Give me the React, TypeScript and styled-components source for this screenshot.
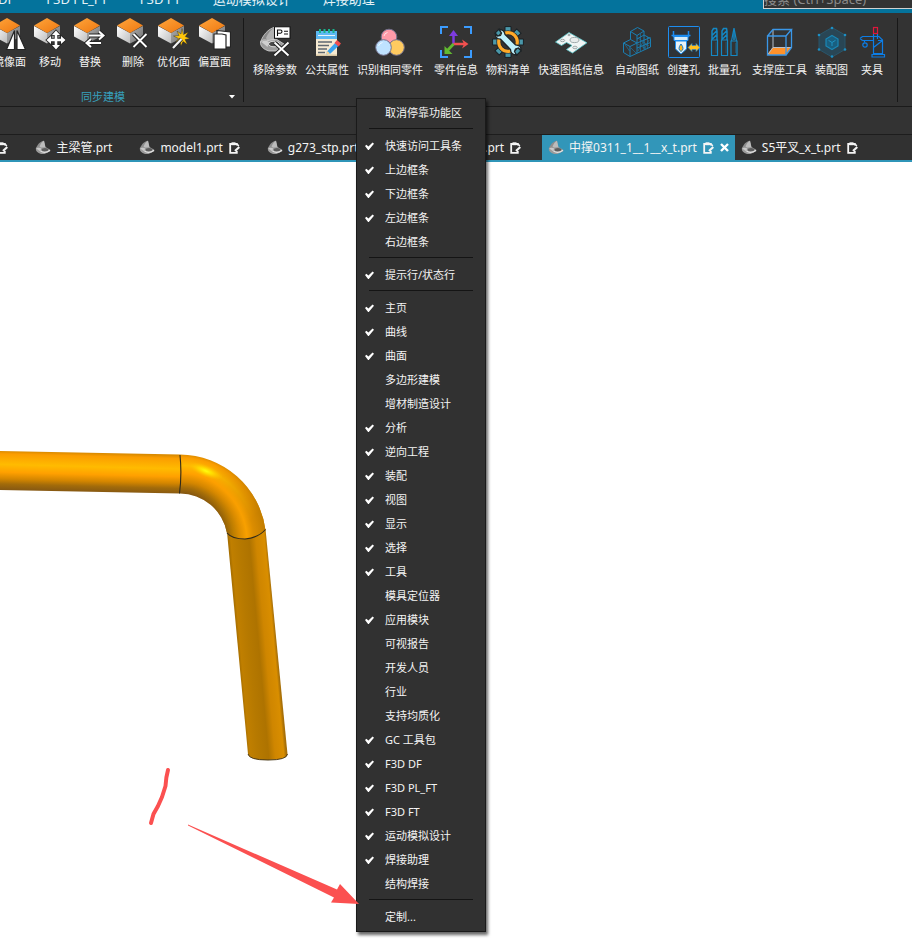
import React from "react";
import styled, { createGlobalStyle } from "styled-components";

const GlobalStyle = createGlobalStyle`
  * { box-sizing: border-box; }
  html, body, #root { height: 100%; }
  body {
    margin: 0;
    background: #fff;
    font-family: "Noto Sans", "Noto Sans CJK SC", sans-serif;
    font-size: 11px;
    color: #f4f4f4;
  }
  button, input { font: inherit; color: inherit; }
  button { border: 0; padding: 0; background: none; }
`;

const Window = styled.div`
  position: relative;
  display: flex;
  flex-direction: column;
  min-height: 100%;
  overflow: hidden;
`;

/* ---------- header ---------- */

const Header = styled.header`
  display: flex;
  justify-content: space-between;
  align-items: flex-end;
  height: 13px;
  background: #04739c;
  overflow: hidden;
`;

const HeaderTabs = styled.nav`
  display: flex;
  flex: none;
  gap: 32px;
  height: 24px;
  margin-left: -29px;
`;

const HeaderTab = styled.button`
  flex: none;
  height: 20px;
  font-size: 13px;
  line-height: 20px;
  white-space: nowrap;
  color: #e6f2f7;
`;

const Search = styled.input`
  flex: none;
  width: 150px;
  height: 24px;
  margin: 0 -1px 4px 0;
  padding: 4px 0 0;
  border: 1px solid #d0d0d0;
  border-radius: 0;
  background: #333;
  font-size: 13px;
  line-height: 18px;
  &::placeholder { color: #8a8a8a; opacity: 1; }
`;

/* ---------- ribbon ---------- */

const Ribbon = styled.section`
  display: flex;
  height: 94px;
  background: #333;
  border-bottom: 1px solid #1b1b1b;
`;

const RibbonGroup = styled.div<{ $clipped?: boolean }>`
  display: flex;
  flex: none;
  flex-direction: column;
  justify-content: space-between;
  margin-left: ${(p) => (p.$clipped ? "-7px" : "0")};
  padding: ${(p) => (p.$clipped ? "5px 0 0" : "13px 9px 0")};
`;

const Divider = styled.div`
  flex: none;
  width: 1px;
  margin: 5px 0 4px;
  background: #181818;
`;

const Clusters = styled.div<{ $end?: boolean }>`
  display: flex;
  gap: 11px;
  padding-right: ${(p) => (p.$end ? "12px" : "0")};
`;

const Cluster = styled.div`
  display: flex;
  gap: 8px;
`;

const Tool = styled.button`
  display: flex;
  flex: none;
  flex-direction: column;
  align-items: center;
  gap: 4px;
  min-width: 32px;
  line-height: 16px;
  white-space: nowrap;
`;

const ToolIcon = styled.svg`
  display: block;
  width: 32px;
  height: 32px;
`;

const GroupFooter = styled.div`
  display: flex;
  align-items: center;
  height: 18px;
`;

const GroupTitle = styled.span`
  flex: 1;
  padding-right: 8px;
  text-align: center;
  line-height: 16px;
  color: #37a0bd;
`;

const Launcher = styled.button`
  display: flex;
  justify-content: center;
  width: 22px;
`;

const EmptyBar = styled.div`
  height: 28px;
  background: #333;
  border-bottom: 1px solid #1d1d1d;
`;

/* ---------- document tabs ---------- */

const TabBar = styled.nav`
  display: flex;
  height: 27px;
  background: #313131;
  border-bottom: 2px solid #2f95b8;
`;

const Tab = styled.div<{ $active?: boolean; $clipped?: boolean }>`
  display: flex;
  flex: none;
  align-items: center;
  gap: 6px;
  padding: 0 6px;
  margin-left: ${(p) => (p.$clipped ? "-98px" : "0")};
  background: ${(p) => (p.$active ? "#3296b9" : "transparent")};
`;

const TabName = styled.button`
  display: flex;
  align-items: center;
  gap: 5px;
  font-size: 12px;
  line-height: 20px;
  white-space: nowrap;
`;

const TabClose = styled.button<{ $shown?: boolean }>`
  display: flex;
  visibility: ${(p) => (p.$shown ? "visible" : "hidden")};
`;

/* ---------- graphics area ---------- */

const Viewport = styled.main`
  flex: 1;
  background: #fff;
  overflow: hidden;
`;

const Drawing = styled.svg`
  display: block;
`;

const Markup = styled.svg`
  position: absolute;
  left: 140px;
  top: 760px;
  pointer-events: none;
`;

/* ---------- context menu ---------- */

const Menu = styled.div`
  position: absolute;
  left: 356px;
  top: 98px;
  width: 130px;
  padding: 2px 0;
  background: #313131;
  border: 1px solid #1a1a1a;
  box-shadow: 2px 3px 3px rgba(0, 0, 0, 0.6);
`;

const MenuAction = styled.button`
  display: block;
  width: 100%;
  height: 24px;
  padding-left: 28px;
  text-align: left;
  line-height: 24px;
  white-space: nowrap;
`;

const MenuToggle = styled.label`
  display: flex;
  align-items: center;
  height: 24px;
  padding-left: 8px;
  line-height: 24px;
  white-space: nowrap;
`;

const MenuCheck = styled.input`
  flex: none;
  appearance: none;
  width: 9px;
  height: 9px;
  margin: 0 11px 0 0;
  background: #fff;
  clip-path: polygon(0 50%, 16% 36%, 38% 56%, 84% 10%, 100% 24%, 42% 94%, 34% 94%);
  &:not(:checked) { background: transparent; }
`;

const MenuLine = styled.hr`
  height: 1px;
  margin: 3px 12px 5px;
  border: 0;
  background: #141414;
`;

/* ---------- icons ---------- */

const Cube = () => (
  <>
    <path d="M0 8 13 15V25.500L0 18.500Z" fill="url(#cubeLeft)" />
    <path d="M13 15 26 8V19L13 25.500Z" fill="url(#cubeRight)" />
    <path d="M0 7.500 13 0 26 7.500 13 15Z" fill="url(#cubeTop)" />
  </>
);

const Part = () => (
  <svg width="16" height="15" viewBox="0 0 16 15">
    <path d="M.8 8.500C2.500 4.500 5 1.500 9 .8L10.500 7.500 5 11Z" fill="#8e8e8e" />
    <path d="M4.500 6.500C5.500 4 7 2 9 .8L10.500 7.500 7 9Z" fill="#bcbcbc" />
    <path d="M.8 8.500C1.500 7 4 7 6 7.500L10.500 7 15.200 9.800V11.300L9.500 14H6C2.500 13 .5 11 .8 8.500Z" fill="#9b9b9b" />
    <path d="M1.200 8.600C2.500 7.400 4.500 7.600 6 8.200L5.500 11.500Z" fill="#c9c9c9" />
    <ellipse cx="10" cy="9.800" rx="3.300" ry="1.700" fill="#5c5c5c" />
    <path d="M5.500 11C8 12.700 12 12.500 15 10.300" stroke="#e2e2e2" strokeWidth="1.100" fill="none" />
  </svg>
);

const Clip = () => (
  <svg width="11" height="12" viewBox="0 0 11 12">
    <path d="M7.800 3.500V2H1.200V10.900H7.800V9" fill="none" stroke="#f5f5f5" strokeWidth="1.800" />
    <path d="M2.500 .3H6.500V3.200H2.500Z" fill="#f5f5f5" />
    <path d="M10.300 5 6 9" fill="none" stroke="#f5f5f5" strokeWidth="2.200" />
    <path d="M8 2 9.800 4" fill="none" stroke="#f5f5f5" strokeWidth="1.600" />
  </svg>
);

const icons: Record<string, React.ReactNode> = {
  mirror: (
    <>
      <Cube />
      <g fill="#fff" stroke="#242424" strokeWidth="1.200">
        <path d="M20.500 12.500V31.500H12.500Z" />
        <path d="M23 12.500V31.500H31.500Z" />
      </g>
    </>
  ),
  move: (
    <>
      <Cube />
      <path
        d="M22 12.500 26 17H23.300V20.700H27V18L31.500 22 27 26V23.300H23.300V27H26L22 31.500 18 27H20.700V23.300H17V26L12.500 22 17 18V20.700H20.700V17H18Z"
        fill="#fff" stroke="#242424" strokeWidth="1.600" paintOrder="stroke"
      />
    </>
  ),
  replace: (
    <>
      <Cube />
      <g fill="none">
        <path d="M15 17.500H29M25 13.500 29.500 17.500 25 21.500M27 25H13M17 21 12.500 25 17 29" stroke="#242424" strokeWidth="4" />
        <path d="M15 17.500H29M25 13.500 29.500 17.500 25 21.500M27 25H13M17 21 12.500 25 17 29" stroke="#fff" strokeWidth="2" />
      </g>
    </>
  ),
  remove: (
    <>
      <Cube />
      <path d="M16.500 16 29.500 29M29.500 16 16.500 29" stroke="#242424" strokeWidth="4" />
      <path d="M16.500 16 29.500 29M29.500 16 16.500 29" stroke="#fff" strokeWidth="1.900" />
    </>
  ),
  optimize: (
    <>
      <Cube />
      <path d="M24 10.500 25.400 16.500 30.500 14 27.300 18.600 32 20.500 27 21.500 29.500 26.500 25 23.500 23 28 22 23 17.500 24.500 20.500 20.500 15.500 18 21 17.500 19 13 23 16Z" fill="#ffc60a" stroke="#242424" strokeWidth=".4" />
      <path d="M15 30 23.500 21" stroke="#242424" strokeWidth="3.800" />
      <path d="M15 30 23.500 21" stroke="#f5f5f5" strokeWidth="2.200" />
    </>
  ),
  offset: (
    <>
      <Cube />
      <path d="M18 12.500 31.500 14V29H18Z" fill="#fff" stroke="#242424" strokeWidth="1.200" />
      <path d="M15 16H23L27 17V31H15Z" fill="#fff" stroke="#242424" strokeWidth="1.200" />
    </>
  ),
  clearParams: (
    <>
      <path d="M1.500 16C4 9 9 3 16 1V14L10 18Z" fill="#8a8a8a" stroke="#d4d4d4" strokeWidth=".8" />
      <path d="M7 12C9 7 12 3.500 16 1V14L10 17Z" fill="#b2b2b2" />
      <path d="M1.500 16C3 13.500 6 13.500 9 14.500L17 13 25 18 17 25H10C4.500 23.500 1 20 1.500 16Z" fill="#9c9c9c" stroke="#d8d8d8" strokeWidth=".8" />
      <path d="M2.500 16C5 14 8 15 10 16L8.500 21Z" fill="#cfcfcf" />
      <ellipse cx="15" cy="18" rx="5.500" ry="2.800" fill="#4a4a4a" stroke="#dedede" />
      <rect x="15.500" y=".8" width="15.500" height="11.500" fill="#fff" stroke="#111" />
      <path d="M18.500 10V4H21.500Q23 4 23 5.500T21.500 7.200H18.500M25 5.300H29M25 8H29" fill="none" stroke="#111" strokeWidth="1.100" />
      <path d="M15.500 16.500 29.500 29.500M29.500 16.500 15.500 29.500" stroke="#242424" strokeWidth="4" />
      <path d="M15.500 16.500 29.500 29.500M29.500 16.500 15.500 29.500" stroke="#fff" strokeWidth="1.900" />
    </>
  ),
  attributes: (
    <>
      <rect x="5" y="5" width="21" height="25" fill="#f6ead2" />
      <rect x="5" y="5" width="21" height="8" fill="#5db9f4" />
      <path d="M5 28.500H26V30H5Z" fill="#d8c6a2" />
      <path d="M9 3V7M13.500 3V7M18 3V7M22.500 3V7" stroke="#18b48d" strokeWidth="2" />
      <path d="M7 9.500H24" stroke="#e7f4fa" />
      <path d="M7 16H21M7 19.500H18M7 23H16M7 26.500H14" stroke="#5f6870" strokeWidth="1.400" />
      <path d="M16 25.500 25 16 28.500 19 19.500 27.500 15.500 28.500Z" fill="#3aa4f0" />
      <path d="M23.500 17 26 14 30 17.500 27.500 20.500Z" fill="#f04e4e" />
      <path d="M15.500 28.500 16.300 25 19 27.500Z" fill="#ffd28a" />
    </>
  ),
  identify: (
    <>
      <circle cx="15" cy="11" r="7.800" fill="#ff9aa9" stroke="#73718c" />
      <circle cx="22.500" cy="21.500" r="7.800" fill="#ffcb60" stroke="#73718c" />
      <circle cx="9.500" cy="21.500" r="7.800" fill="#bfe3ff" stroke="#73718c" />
      <path d="M10 10Q10.500 7 13.500 6.500M4.500 20Q5.500 17 8.500 16.500" fill="none" stroke="#fff" opacity=".7" />
    </>
  ),
  info: (
    <g fill="none" strokeWidth="2">
      <path d="M1 8V1H8M24 1H31V8M31 24V31H24M8 31H1V24" stroke="#3b9cff" />
      <path d="M13.500 18V7" stroke="#7d3be0" strokeWidth="2.500" />
      <path d="M9 10 13.500 4 18 10Z" fill="#7d3be0" />
      <path d="M13.500 18H25" stroke="#f2504f" strokeWidth="2.500" />
      <path d="M22 13.500 28.500 18 22 22.500 24 18Z" fill="#f2504f" />
      <path d="M13.500 18 7 25" stroke="#62b930" strokeWidth="2.800" />
      <path d="M4.500 20V28H12.500Z" fill="#62b930" />
    </g>
  ),
  bom: (
    <>
      {[0, 45, 90, 135, 180, 225, 270, 315].map((a) => (
        <path key={a} d="M13 .6H19V6H13Z" transform={`rotate(${a} 16 16)`} fill="#4a98aa" stroke="#1a1f22" />
      ))}
      <circle cx="16" cy="16" r="9.300" fill="#333" stroke="#1e2427" strokeWidth="4.600" />
      <circle cx="16" cy="16" r="9.300" fill="none" stroke="#ffa928" strokeWidth="3.200" />
      <path
        d="M7 3.500 9.500 7 8.500 9.500 5.500 10 3.500 7.500Q3 13 8.500 13.200L18.500 23.500Q18.500 28.500 24.500 29L22.500 25.500 23.500 23 26.500 22 29 24.500Q29.500 19 23.500 18.800L13 8.500Q12.500 3.500 7 3.500Z"
        fill="#bdf0fb" stroke="#1e2427" strokeWidth="1.300"
      />
    </>
  ),
  fastInfo: (
    <>
      <path d="M.5 16 14 6.500 32 16.800 17.500 27 11.500 23.500 17 19.500 11.500 16.500 6.500 19.500Z" fill="#f1f5f5" stroke="#56c4c8" strokeWidth=".8" />
      <g fill="#e8ecec" stroke="#8d9899" strokeWidth=".8">
        <ellipse cx="7.500" cy="14.500" rx="2.200" ry="1.200" />
        <ellipse cx="19.500" cy="14" rx="4.500" ry="2.600" />
        <ellipse cx="20" cy="21.500" rx="2.200" ry="1.300" />
        <ellipse cx="14" cy="9" rx="1.300" ry=".7" />
      </g>
    </>
  ),
  autoDrawing: (
    <g fill="none" stroke="#1a7fb3" strokeWidth="1">
      <path d="M2.500 17 9.500 13.500V5.500L16.500 1.500 23 5V9L29.500 12.500V21L9 30.500 2.500 26.500Z" />
      <path d="M2.500 17 9 20.500V30.500M9 20.500 16 17V9.500L9.500 5.500M16 9.500 23 5M16 17 9.500 13.500M16 17V27M16 17 29.500 11.500M16 13 23 9M23 9V23.500M16 22 29.500 16.500" />
      <path d="M17 12 28 20M17 18 25 23M4 18.500 8.500 25M10 22 15 27M17 25 22 16M24 22 28 14M19.500 8V25M26.500 11V22" opacity=".6" />
    </g>
  ),
  hole: (
    <>
      <rect x=".5" y=".5" width="31" height="31" rx="1" fill="#2e3338" stroke="#1d8df0" />
      <path d="M5.500 5V10.500H20.500V5M3.500 9.500H22.500" fill="none" stroke="#1d8df0" strokeWidth="1.500" />
      <path d="M6 10.500H20V14.500H6Z" fill="#d7ecf8" stroke="#1d8df0" />
      <path d="M7.500 15H18.500V23L13 28 7.500 23Z" fill="#e7f2f8" stroke="#1d8df0" />
      <path d="M13 18Q17 23 13 25.500 9 23 13 18Z" fill="#ffb51c" stroke="#1479ca" />
      <path d="M20 21.500 24 17.500V19.500H28V17.500L32 21.500 28 25.500V23.500H24V25.500Z" fill="#ffbf1f" stroke="#1d8df0" strokeWidth=".6" />
    </>
  ),
  batchHole: (
    <g fill="none" stroke="#1488c4" strokeWidth="1.200">
      <path d="M2.500 14H8.500V29.500H2.500ZM12.500 14H18.500V29.500H12.500ZM22 15H28V29.500H22ZM22.500 15 25 2 27.500 15" />
      <path d="M3 14V5L4.500 2.500H7.500L8 5V14M3.500 9 7.500 5M3.500 13 7.500 9M13 14V5L14.500 2.500H17.500L18 5V14M13.500 9 17.500 5M13.500 13 17.500 9M25 6V14" strokeWidth="1.500" />
      <path d="M7 16V27M17 16V27M26.500 17V27" opacity=".35" strokeWidth="1" />
    </g>
  ),
  support: (
    <>
      <path d="M3 29 8.500 21.500H27L22 29Z" fill="#ff922b" />
      <g fill="none" stroke="#3a97e8" strokeWidth="1.300">
        <path d="M9 3.500V21.500H27.500M9 21.500 3.500 29" stroke="#b5bfca" strokeWidth="1" />
        <path d="M3.500 10H22V29H3.500ZM3.500 10 9 3.500H27.500L22 10M27.500 3.500V21.500L22 29" />
      </g>
    </>
  ),
  assembly: (
    <>
      <path d="M16 1.500 29 9V23.500L16 31 3 23.500V9Z" fill="#294655" stroke="#29556a" />
      <path d="M16 9.500 22 13V20L16 23.500 10 20V13Z" fill="#195f80" stroke="#1a87b6" strokeWidth="1.200" />
      <path d="M12.500 14.300 16 16.500 19.500 14.300M16 16.500V20" fill="none" stroke="#1f93c2" />
      <g fill="#1c8fc4">
        <circle cx="16" cy="2" r="1.300" /><circle cx="29" cy="9" r="1.300" /><circle cx="29" cy="23.500" r="1.300" />
        <circle cx="16" cy="30.500" r="1.300" /><circle cx="3" cy="9" r="1.300" /><circle cx="3" cy="23.500" r="1.300" />
      </g>
    </>
  ),
  clamp: (
    <g fill="none" stroke="#0c7de6" strokeWidth="1.200">
      <rect x="17.500" y="1.500" width="4" height="6" stroke="#e0173c" />
      <path d="M17.500 8V28M21.500 8V13M4 12.500 6.500 10.500H23L26.500 14V27.500H17.500M6.500 14.500H17.500M4 12.500 6.500 14.500M17.500 21.500 26.500 14.500M8.500 14.500V16.500M16 28.500H28.500V31H16ZM26.500 14.500H22" />
      <circle cx="9" cy="19" r="2.200" />
    </g>
  ),
};

const syncClusters = [
  [["mirror", "镜像面"], ["move", "移动"], ["replace", "替换"]],
  [["remove", "删除"], ["optimize", "优化面"], ["offset", "偏置面"]],
];

const toolClusters = [
  [["clearParams", "移除参数"], ["attributes", "公共属性"], ["identify", "识别相同零件"]],
  [["info", "零件信息"], ["bom", "物料清单"], ["fastInfo", "快速图纸信息"]],
  [["autoDrawing", "自动图纸"], ["hole", "创建孔"], ["batchHole", "批量孔"]],
  [["support", "支撑座工具"], ["assembly", "装配图"], ["clamp", "夹具"]],
];

const ToolClusters = ({ data, end }: { data: string[][][]; end?: boolean }) => (
  <Clusters $end={end}>
    {data.map((cluster, i) => (
      <Cluster key={i}>
        {cluster.map(([icon, label]) => (
          <Tool key={icon} type="button">
            <ToolIcon viewBox="0 0 32 32" aria-hidden="true">{icons[icon]}</ToolIcon>
            {label}
          </Tool>
        ))}
      </Cluster>
    ))}
  </Clusters>
);

type TabData = { name: string; modified?: boolean; active?: boolean; clipped?: boolean };

const tabs: TabData[] = [
  { name: "model2.prt", modified: true, clipped: true },
  { name: "主梁管.prt" },
  { name: "model1.prt", modified: true },
  { name: "g273_stp.prt", modified: true },
  { name: "g2735_sub.prt", modified: true },
  { name: "中撑0311_1__1__x_t.prt", modified: true, active: true },
  { name: "S5平叉_x_t.prt", modified: true },
];

type Entry = [label: string, checked: boolean];

const sections: Entry[][] = [
  [["快速访问工具条", true], ["上边框条", true], ["下边框条", true], ["左边框条", true], ["右边框条", false]],
  [["提示行/状态行", true]],
  [
    ["主页", true], ["曲线", true], ["曲面", true], ["多边形建模", false], ["增材制造设计", false],
    ["分析", true], ["逆向工程", true], ["装配", true], ["视图", true], ["显示", true], ["选择", true],
    ["工具", true], ["模具定位器", false], ["应用模块", true], ["可视报告", false], ["开发人员", false],
    ["行业", false], ["支持均质化", false], ["GC 工具包", true], ["F3D DF", true], ["F3D PL_FT", true],
    ["F3D FT", true], ["运动模拟设计", true], ["焊接助理", true], ["结构焊接", false],
  ],
];

const bend = "M180 454.500A87 87 0 0 1 265.500 530Q258 538 245 539 232 539 227 533A48 48 0 0 0 180 493.500Z";

const Model = () => (
  <Drawing width="912" height="778" viewBox="0 162 912 778" role="img" aria-label="弯管模型">
    <defs>
      <linearGradient id="tubeA" gradientUnits="userSpaceOnUse" x1="90" y1="453" x2="89" y2="492">
        <stop offset="0" stopColor="#d98a00" />
        <stop offset=".08" stopColor="#fb9d00" />
        <stop offset=".35" stopColor="#ffbb00" />
        <stop offset=".55" stopColor="#ffa000" />
        <stop offset=".72" stopColor="#d48600" />
        <stop offset=".85" stopColor="#a26b0a" />
        <stop offset="1" stopColor="#865812" />
      </linearGradient>
      <linearGradient id="tubeB" gradientUnits="userSpaceOnUse" x1="227" y1="533" x2="266" y2="529.500">
        <stop offset="0" stopColor="#a06a00" />
        <stop offset=".08" stopColor="#c07f00" />
        <stop offset=".3" stopColor="#b67900" />
        <stop offset=".55" stopColor="#ae7300" />
        <stop offset=".72" stopColor="#cf8600" />
        <stop offset=".94" stopColor="#d98e00" />
        <stop offset="1" stopColor="#a87008" />
      </linearGradient>
      <radialGradient id="bendA" gradientUnits="userSpaceOnUse" cx="180" cy="541" r="87">
        <stop offset=".55" stopColor="#865812" />
        <stop offset=".61" stopColor="#a26b0a" />
        <stop offset=".68" stopColor="#d48600" />
        <stop offset=".78" stopColor="#ffa000" />
        <stop offset=".87" stopColor="#ffbb00" />
        <stop offset=".96" stopColor="#fb9d00" />
        <stop offset="1" stopColor="#d98a00" />
      </radialGradient>
      <radialGradient id="bendB" gradientUnits="userSpaceOnUse" cx="180" cy="541" r="87">
        <stop offset=".55" stopColor="#9a6604" />
        <stop offset=".62" stopColor="#be7e00" />
        <stop offset=".7" stopColor="#e09000" />
        <stop offset=".77" stopColor="#f8a000" />
        <stop offset=".85" stopColor="#dc8d00" />
        <stop offset="1" stopColor="#c07c00" />
      </radialGradient>
      <linearGradient id="fade" gradientUnits="userSpaceOnUse" x1="205" y1="475" x2="248" y2="522">
        <stop offset="0" stopColor="#000" />
        <stop offset="1" stopColor="#fff" />
      </linearGradient>
      <mask id="bendMask" maskUnits="userSpaceOnUse" x="170" y="440" width="110" height="110">
        <rect x="170" y="440" width="110" height="110" fill="url(#fade)" />
      </mask>
      <radialGradient id="gloss">
        <stop offset="0" stopColor="#ffff10" />
        <stop offset=".4" stopColor="#ffe500" stopOpacity=".75" />
        <stop offset="1" stopColor="#ffc000" stopOpacity="0" />
      </radialGradient>
    </defs>
    <path d="M0 451 180 454.500V493.500L0 490Z" fill="url(#tubeA)" />
    <path d="M227 532 265.500 529 287.500 754Q287.500 759.500 268 760 249 760 248 754Z" fill="url(#tubeB)" />
    <path d="M248 754Q249 760 268 760T287.500 754" fill="none" stroke="#4b3a18" />
    <path d={bend} fill="url(#bendA)" />
    <path d={bend} fill="url(#bendB)" mask="url(#bendMask)" />
    <ellipse cx="206" cy="471" rx="18" ry="6" transform="rotate(22 206 471)" fill="url(#gloss)" />
    <path d="M180 455Q182 474 179.500 493.500M227 533Q232 539 245 539 258 538 265.500 529.500" fill="none" stroke="#2f2a1c" strokeWidth="1.100" />
  </Drawing>
);

export default function App() {
  return (
    <Window>
      <GlobalStyle />
      <Header>
        <HeaderTabs>
          {["F3D DF", "F3D PL_FT", "F3D FT", "运动模拟设计", "焊接助理"].map((t) => (
            <HeaderTab key={t} type="button">{t}</HeaderTab>
          ))}
        </HeaderTabs>
        <Search aria-label="搜索" placeholder="搜索 (Ctrl+Space)" />
      </Header>

      <Ribbon>
        <RibbonGroup $clipped>
          <ToolClusters data={syncClusters} end />
          <GroupFooter>
            <GroupTitle>同步建模</GroupTitle>
            <Launcher type="button" aria-label="更多">
              <svg width="6" height="4" viewBox="0 0 6 4"><path d="M0 0H6L3 3.500Z" fill="#fff" /></svg>
            </Launcher>
          </GroupFooter>
        </RibbonGroup>
        <Divider />
        <RibbonGroup>
          <ToolClusters data={toolClusters} />
        </RibbonGroup>
        <Divider />
        <svg width="0" height="0" aria-hidden="true">
          <defs>
            <linearGradient id="cubeTop" x1="0" y1="0" x2="1" y2="1">
              <stop offset="0" stopColor="#ffa63c" />
              <stop offset="1" stopColor="#ee7710" />
            </linearGradient>
            <linearGradient id="cubeLeft" x1="0" y1="0" x2="1" y2="1">
              <stop offset="0" stopColor="#fff" />
              <stop offset="1" stopColor="#bdbdbd" />
            </linearGradient>
            <linearGradient id="cubeRight" x1="0" y1="0" x2="1" y2="1">
              <stop offset="0" stopColor="#b4b4b4" />
              <stop offset="1" stopColor="#6c6c6c" />
            </linearGradient>
          </defs>
        </svg>
      </Ribbon>
      <EmptyBar />

      <TabBar>
        {tabs.map((t) => (
          <Tab key={t.name} $active={t.active} $clipped={t.clipped}>
            <TabName type="button"><Part />{t.name}</TabName>
            {t.modified && <Clip />}
            <TabClose type="button" aria-label="关闭" $shown={t.active}>
              <svg width="9" height="9" viewBox="0 0 9 9"><path d="M1 1 8 8M8 1 1 8" stroke="#fff" strokeWidth="2.400" /></svg>
            </TabClose>
          </Tab>
        ))}
      </TabBar>

      <Viewport><Model /></Viewport>

      <Menu>
        <MenuAction type="button">取消停靠功能区</MenuAction>
        {sections.map((section, i) => (
          <React.Fragment key={i}>
            <MenuLine />
            {section.map(([label, checked]) => (
              <MenuToggle key={label}>
                <MenuCheck type="checkbox" defaultChecked={checked} />
                {label}
              </MenuToggle>
            ))}
          </React.Fragment>
        ))}
        <MenuLine />
        <MenuAction type="button">定制...</MenuAction>
      </Menu>

      <Markup width="230" height="150" viewBox="140 760 230 150" aria-hidden="true">
        <path d="M168 770Q166 777 165.500 786L162 797 158 806 153.500 814 151 823" fill="none" stroke="#fb5050" strokeWidth="4" strokeLinecap="round" strokeLinejoin="round" />
        <path d="M188 824.500 337 889.500 340 884 359 904 331 902.500 334 897.500 188 825.500Z" fill="#fb5050" />
      </Markup>
    </Window>
  );
}
